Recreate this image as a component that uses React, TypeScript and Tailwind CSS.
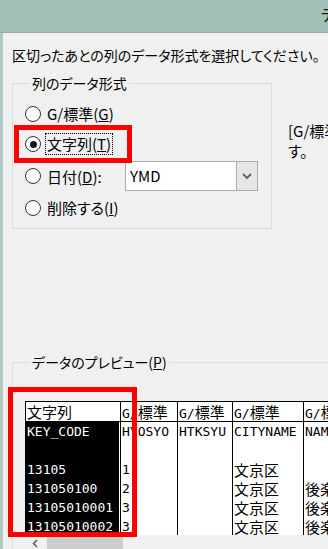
import React from "react";

const CJK_RE = /([\u3000-\u9fff\uff00-\uffef]+)/;

function Mixed({ text }: { text: string }) {
  const parts = text.split(CJK_RE).filter((p) => p.length > 0);
  return (
    <>
      {parts.map((p, i) =>
        CJK_RE.test(p) ? (
          <span key={i} className="text-[15px] font-['Noto_Sans_CJK_JP',sans-serif]">
            {p}
          </span>
        ) : (
          <span key={i}>{p}</span>
        )
      )}
    </>
  );
}

function Radio({ checked }: { checked?: boolean }) {
  return (
    <div className="w-[16px] h-[16px] shrink-0 rounded-full border border-[#333333] bg-white flex items-center justify-center">
      {checked && <div className="w-[7px] h-[7px] rounded-full bg-[#1a1a1a]" />}
    </div>
  );
}

const headers = ["文字列", "G/標準", "G/標準", "G/標準", "G/標準"];
const rows: string[][] = [
  ["KEY_CODE", "HYOSYO", "HTKSYU", "CITYNAME", "NAME"],
  ["", "", "", "", ""],
  ["13105", "1", "", "文京区", ""],
  ["131050100", "2", "", "文京区", "後楽"],
  ["13105010001", "3", "", "文京区", "後楽"],
  ["13105010002", "3", "", "文京区", "後楽"],
  ["", "", "", "", ""],
];

export default function App() {
  return (
    <div className="relative w-[328px] h-[549px] overflow-hidden bg-[#f0f0f0] text-black font-['Noto_Sans_CJK_JP',sans-serif] [font-feature-settings:'palt']">
      {/* title bar */}
      <div className="h-[33px] bg-[#a2c1b9] border-b border-[#93aea6] overflow-hidden whitespace-nowrap pl-[321px] pt-[4px] text-[16px] leading-[20px] text-[#1a1a1a]">
        テキスト ファイル ウィザード
      </div>

      {/* body */}
      <div className="h-[516px] border-l-[3px] border-[#b2c7c1] pl-[9px] pt-[12px]">
        <div className="text-[14px] leading-[20px] whitespace-nowrap">
          区切ったあとの列のデータ形式を選択してください。
        </div>

        <div className="mt-[8px] flex items-start">
          <fieldset className="w-[260px] shrink-0 border border-[#dcdcdc] pl-[12px] pr-[12px] pt-[6px] pb-[5px]">
            <legend className="ml-[5px] px-[2px] text-[14px] leading-[20px]">列のデータ形式</legend>

            <div className="flex items-center h-[30px]">
              <Radio />
              <span className="ml-[4px] px-[1px] border border-transparent text-[15px] leading-[20px] whitespace-nowrap">
                G/標準(<span className="underline">G</span>)
              </span>
            </div>
            <div className="flex items-center h-[30px]">
              <Radio checked />
              <span className="ml-[4px] px-[1px] border border-dotted border-black text-[15px] leading-[20px] whitespace-nowrap">
                文字列(<span className="underline">T</span>)
              </span>
            </div>
            <div className="flex items-center h-[34px]">
              <Radio />
              <div className="w-[84px] shrink-0">
                <span className="ml-[4px] px-[1px] border border-transparent text-[15px] leading-[20px] whitespace-nowrap">
                  日付(<span className="underline">D</span>):
                </span>
              </div>
              <div className="w-[133px] h-[30px] shrink-0 flex border border-[#acacac] bg-white">
                <div className="flex-1 pl-[4px] text-[15px] leading-[28px]">YMD</div>
                <div className="w-[21px] border-l border-[#acacac] bg-[#e6e6e6] flex items-center justify-center">
                  <svg width="10" height="6" viewBox="0 0 10 6">
                    <path d="M1 1 L5 5 L9 1" fill="none" stroke="#606060" strokeWidth="1.8" />
                  </svg>
                </div>
              </div>
            </div>
            <div className="flex items-center h-[30px]">
              <Radio />
              <span className="ml-[4px] px-[1px] border border-transparent text-[15px] leading-[20px] whitespace-nowrap">
                削除する(<span className="underline">I</span>)
              </span>
            </div>
          </fieldset>

          <div className="ml-[16px] mt-[48px] text-[15px] leading-[20px] whitespace-nowrap">
            [G/標準] を選択すると、数字は数値に、日付は日付に、その他の値は文字列に変換されま
            <br />
            す。
          </div>
        </div>

        {/* preview */}
        <fieldset className="mt-[123px] w-[420px] h-[220px] border border-[#dcdcdc] pl-[12px] pt-[29px]">
          <legend className="ml-[5px] px-[2px] text-[14px] leading-[20px]">
            データのプレビュー(<span className="underline">P</span>)
          </legend>

          <div className="h-[134px] overflow-hidden bg-white border-l border-t border-black">
            <div className="grid grid-cols-[95px_57px_55px_71px_120px] font-['DejaVu_Sans_Mono','Noto_Sans_CJK_JP',monospace] text-[13px] leading-[19px] [font-feature-settings:normal]">
              {headers.map((h, i) => (
                <div
                  key={"h" + i}
                  className="h-[20px] border-r border-b border-black pl-[1px] whitespace-nowrap overflow-hidden"
                >
                  <Mixed text={h} />
                </div>
              ))}
              {rows.map((r, ri) =>
                r.map((c, ci) =>
                  ci === 0 ? (
                    <div key={ri + "-" + ci} className="h-[19px] border-r border-black">
                      <div className="h-full mr-[1px] bg-black text-white pl-[1px] whitespace-nowrap overflow-hidden">
                        <Mixed text={c} />
                      </div>
                    </div>
                  ) : (
                    <div
                      key={ri + "-" + ci}
                      className="h-[19px] border-r border-black pl-[1px] whitespace-nowrap overflow-hidden"
                    >
                      <Mixed text={c} />
                    </div>
                  )
                )
              )}
            </div>
          </div>

          {/* horizontal scrollbar */}
          <div className="h-[17px] flex bg-[#f0f0f0]">
            <div className="w-[20px] flex items-center justify-center">
              <svg width="6" height="9" viewBox="0 0 6 9">
                <path d="M5 1 L1.5 4.5 L5 8" fill="none" stroke="#606060" strokeWidth="1.6" />
              </svg>
            </div>
            <div className="ml-[2px] mt-[2px] w-[76px] h-[13px] bg-[#cdcdcd]" />
          </div>
        </fieldset>
      </div>

      {/* red annotation boxes */}
      <div className="absolute left-[14px] top-[125px] w-[118px] h-[38px] border-[5px] border-[#ff0000]" />
      <div className="absolute left-[8px] top-[387px] w-[129px] h-[150px] border-[5px] border-[#ff0000]" />
    </div>
  );
}
